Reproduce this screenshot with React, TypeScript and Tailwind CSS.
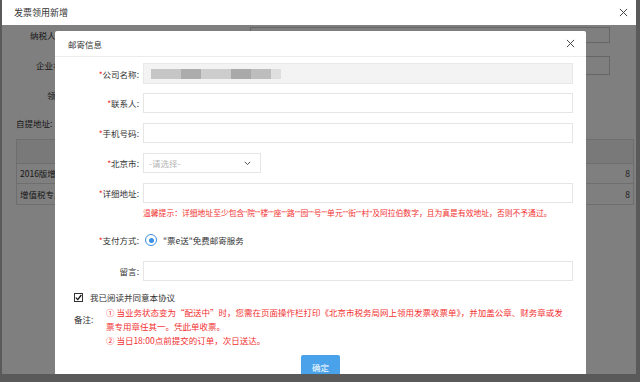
import React from "react";

function CloseIcon({ size = 9 }: { size?: number }) {
  return (
    <svg width={size} height={size} viewBox="0 0 10 10" className="block">
      <path d="M1 1 L9 9 M9 1 L1 9" stroke="#444" strokeWidth="1.1" fill="none" />
    </svg>
  );
}

function FieldLabel({ text, required = false }: { text: string; required?: boolean }) {
  return (
    <div className="w-[84px] shrink-0 text-right text-[#333] whitespace-nowrap">
      {required ? <span className="text-[#f23030]">*</span> : null}
      {text}:
    </div>
  );
}

// the page behind the dialog, only its left and right edges show
function BackgroundForm() {
  return (
    <div className="flex flex-col text-[8.5px] text-[#333]">
      <div className="-mt-[5px] flex h-[30px] items-center">
        <span className="ml-[28px] w-[25px] overflow-hidden whitespace-nowrap">纳税人识别号:</span>
        <div className="ml-auto mr-[26px] h-[16px] w-[360px] border border-[#ccc]" />
      </div>
      <div className="flex h-[30px] items-center">
        <span className="ml-[34px] w-[19px] overflow-hidden whitespace-nowrap">企业名称:</span>
        <div className="ml-auto mr-[26px] h-[19px] w-[360px] border border-[#ccc]" />
      </div>
      <div className="flex h-[30px] items-center">
        <span className="ml-[45px] w-[8px] overflow-hidden whitespace-nowrap">领票人:</span>
      </div>
      <div className="flex h-[26px] items-center">
        <span className="pl-[14px]">自提地址:</span>
      </div>
      <div className="ml-[14px] mt-[3px] w-[618px] border border-[#ddd]">
        <div className="h-[24px] border-b border-[#ddd] bg-[#f3f3f3]" />
        <div className="flex h-[20px] items-center justify-between border-b border-[#ddd] px-[3px]">
          <span className="w-[36px] overflow-hidden whitespace-nowrap">2016版增值税普通发票</span>
          <span>8</span>
        </div>
        <div className="flex h-[20px] items-center justify-between px-[3px]">
          <span className="w-[36px] overflow-hidden whitespace-nowrap">增值税专用发票</span>
          <span>8</span>
        </div>
      </div>
    </div>
  );
}

function BlurredName() {
  const blocks = [
    { w: "w-[30px]", c: "bg-[#c6c6c6]" },
    { w: "w-[20px]", c: "bg-[#acacac]" },
    { w: "w-[30px]", c: "bg-[#cdcdcd]" },
    { w: "w-[20px]", c: "bg-[#a9a9a9]" },
    { w: "w-[20px]", c: "bg-[#bdbdbd]" },
    { w: "w-[10px]", c: "bg-[#dedede]" },
  ];
  return (
    <div className="ml-[7px] flex h-[10px] blur-[0.6px]">
      {blocks.map((b, i) => (
        <div key={i} className={`${b.w} ${b.c} h-full`} />
      ))}
    </div>
  );
}

function MailDialog() {
  return (
    <div className="absolute left-[53px] top-[6px] h-[360px] w-[531px] rounded-t-[2px] bg-white text-[8.5px] leading-[12px]">
      <div className="flex h-[26px] items-center justify-between border-b border-[#ececec] pl-[13px] pr-[11px]">
        <span className="text-[#333]">邮寄信息</span>
        <CloseIcon />
      </div>
      <div className="flex flex-col pr-[13px] pt-[6px]">
        <div className="flex h-[21px] items-center gap-[4px]">
          <FieldLabel text="公司名称" required />
          <div className="flex h-full flex-1 items-center border border-[#e8e8e8] bg-[#f3f3f3]">
            <BlurredName />
          </div>
        </div>
        <div className="mt-[9px] flex h-[20px] items-center gap-[4px]">
          <FieldLabel text="联系人" required />
          <div className="h-full flex-1 border border-[#e6e6e6]" />
        </div>
        <div className="mt-[10px] flex h-[20px] items-center gap-[4px]">
          <FieldLabel text="手机号码" required />
          <div className="h-full flex-1 border border-[#e6e6e6]" />
        </div>
        <div className="mt-[10px] flex h-[20px] items-center gap-[4px]">
          <FieldLabel text="北京市" required />
          <div className="flex h-full w-[118px] items-center justify-between border border-[#e6e6e6] pl-[5px] pr-[9px] text-[#b5b5b5]">
            <span>-请选择-</span>
            <svg width="7" height="5" viewBox="0 0 7 5">
              <path d="M0.8 0.8 L3.5 3.6 L6.2 0.8" stroke="#555" strokeWidth="1" fill="none" />
            </svg>
          </div>
        </div>
        <div className="mt-[10px] flex h-[20px] items-center gap-[4px]">
          <FieldLabel text="详细地址" required />
          <div className="h-full flex-1 border border-[#e6e6e6]" />
        </div>
        <div className="ml-[88px] mt-[5px] h-[12px] whitespace-nowrap font-['Liberation_Sans','Noto_Sans_CJK_SC',sans-serif] text-[7.8px] text-[#f23030]">
          温馨提示：详细地址至少包含"院""楼""座""路""园""号""单元""街""村"及阿拉伯数字，且为真是有效地址，否则不予通过。
        </div>
        <div className="mt-[10px] flex h-[20px] items-center gap-[4px]">
          <FieldLabel text="支付方式" required />
          <div className="ml-[2px] flex items-center gap-[6px] text-[#333]">
            <span className="flex h-[12px] w-[12px] items-center justify-center rounded-full border-[1.5px] border-[#3b8fe4]">
              <span className="h-[5px] w-[5px] rounded-full bg-[#3b8fe4]" />
            </span>
            <span>"票e送"免费邮寄服务</span>
          </div>
        </div>
        <div className="mt-[11px] flex h-[20px] items-center gap-[4px]">
          <FieldLabel text="留言" />
          <div className="h-full flex-1 border border-[#e6e6e6]" />
        </div>
        <div className="mt-[9px] flex h-[14px] items-center pl-[19px] text-[#333]">
          <span className="flex h-[9px] w-[9px] items-center justify-center border border-[#333] bg-white">
            <svg width="7" height="7" viewBox="0 0 7 7">
              <path d="M0.8 3.6 L2.8 5.6 L6.3 1" stroke="#111" strokeWidth="1.3" fill="none" />
            </svg>
          </span>
          <span className="ml-[7px]">我已阅读并同意本协议</span>
        </div>
        <div className="mt-[1px] flex pl-[19px] leading-[14px]">
          <span className="w-[32px] shrink-0 pt-[7px] text-[#333]">备注:</span>
          <div className="flex flex-col whitespace-nowrap text-[#f23030]">
            <span>① 当业务状态变为“配送中”时，您需在页面操作栏打印《北京市税务局网上领用发票收票单》，并加盖公章、财务章或发</span>
            <span>票专用章任其一。凭此单收票。</span>
            <span>② 当日18:00点前提交的订单，次日送达。</span>
          </div>
        </div>
        <div className="mt-[8px] flex justify-center pl-[13px]">
          <button type="button" className="h-[24px] w-[39px] rounded-[2px] bg-[#4aa3ea] text-[8.5px] text-white">
            确定
          </button>
        </div>
      </div>
    </div>
  );
}

export default function App() {
  return (
    <div className="h-[382px] w-[640px] overflow-hidden bg-[#5a5a5a] font-['Noto_Sans_CJK_SC',sans-serif]">
      <div className="ml-[2px] flex h-[374px] w-[634px] flex-col bg-white">
        <div className="flex h-[25px] shrink-0 items-center justify-between pl-[12px] pr-[8px]">
          <span className="text-[9px] text-[#333]">发票领用新增</span>
          <CloseIcon />
        </div>
        <div className="relative flex-1 overflow-hidden">
          <BackgroundForm />
          <div className="absolute inset-0 bg-black/50" />
          <MailDialog />
        </div>
      </div>
    </div>
  );
}
